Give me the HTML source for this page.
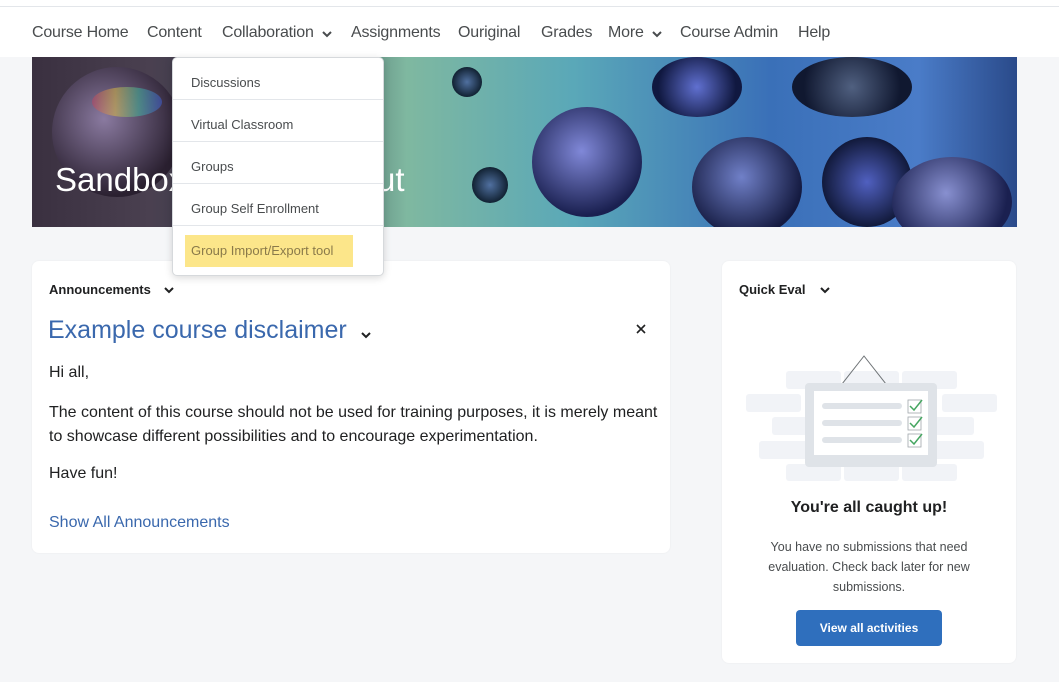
<!DOCTYPE html>
<html><head><meta charset="utf-8"><style>
*{box-sizing:border-box;margin:0;padding:0}
body{width:1059px;height:682px;overflow:hidden;background:#f5f6f8;font-family:"Liberation Sans",sans-serif;color:#202122;position:relative}
.a{position:absolute;white-space:nowrap}
.top{position:absolute;left:0;top:0;width:1059px;height:7px;background:#fff;border-bottom:1px solid #e3e6ea}
.nav{position:absolute;left:0;top:7px;width:1059px;height:50px;background:#fff}
.nav span{position:absolute;top:17px;font-size:16px;color:#494c4e;letter-spacing:-0.2px}
.banner{position:absolute;left:32px;top:57px;width:985px;height:170px;overflow:hidden;
background:linear-gradient(90deg,#3a3040 0%,#4a4050 12%,#2d3a48 25%,#7fb8a0 38%,#5aa8b8 55%,#3a70b8 75%,#4a7cc8 90%,#2a4a8a 100%)}
.banner i{position:absolute;border-radius:50%}
.dd{position:absolute;z-index:10;left:172px;top:57px;width:212px;height:219px;background:#fff;border:1px solid #d6d9dc;border-radius:5px;box-shadow:0 2px 8px rgba(0,0,0,.15)}
.dd div{height:42px;border-bottom:1px solid #e3e6ea;font-size:13px;color:#494c4e;padding:17px 0 0 18px}
.dd div:last-child{border:none}
.card{position:absolute;background:#fff;border-radius:7px;box-shadow:0 0 2px rgba(0,0,0,.05)}
</style></head><body>
<div class="top"></div>
<div class="nav">
<span style="left:32px">Course Home</span>
<span style="left:147px">Content</span>
<span style="left:222px">Collaboration</span>
<svg class="a" style="left:321px;top:23px" width="12" height="8" viewBox="0 0 12 8"><path d="M2 2l4 4 4-4" stroke="#494c4e" stroke-width="2" fill="none"/></svg>
<span style="left:351px">Assignments</span>
<span style="left:458px">Ouriginal</span>
<span style="left:541px">Grades</span>
<span style="left:608px">More</span>
<svg class="a" style="left:651px;top:23px" width="12" height="8" viewBox="0 0 12 8"><path d="M2 2l4 4 4-4" stroke="#494c4e" stroke-width="2" fill="none"/></svg>
<span style="left:680px">Course Admin</span>
<span style="left:798px">Help</span>
</div>
<div class="banner">
<i style="left:20px;top:10px;width:130px;height:130px;background:radial-gradient(circle at 40% 40%,#8a7aa0,#2a2030 70%)"></i>
<i style="left:60px;top:30px;width:70px;height:30px;background:linear-gradient(90deg,#c04060,#e0c040,#40c0a0,#4060e0);opacity:.5"></i>
<i style="left:150px;top:80px;width:90px;height:90px;background:radial-gradient(circle,#504858,#201820 70%)"></i>
<i style="left:500px;top:50px;width:110px;height:110px;background:radial-gradient(circle at 45% 40%,#8088d8,#1a2050 72%)"></i>
<i style="left:620px;top:0px;width:90px;height:60px;background:radial-gradient(circle,#6070d0,#101840 72%)"></i>
<i style="left:660px;top:80px;width:110px;height:100px;background:radial-gradient(circle at 45% 40%,#7080c8,#141a40 72%)"></i>
<i style="left:790px;top:80px;width:90px;height:90px;background:radial-gradient(circle,#5060c0,#101838 72%)"></i>
<i style="left:860px;top:100px;width:120px;height:90px;background:radial-gradient(circle at 45% 40%,#8890d0,#1a2050 72%)"></i>
<i style="left:760px;top:0;width:120px;height:60px;background:radial-gradient(circle,#506080,#101830 72%)"></i>
<i style="left:420px;top:10px;width:30px;height:30px;background:radial-gradient(circle,#5070a0,#102030 72%)"></i>
<i style="left:440px;top:110px;width:36px;height:36px;background:radial-gradient(circle,#5070a0,#102030 72%)"></i>
<div class="a" style="left:23px;top:104px;font-size:33px;color:#fff">Sandbox</div>
<div class="a" style="left:345px;top:104px;font-size:33px;color:#fff">ut</div>
</div>
<div class="dd">
<div>Discussions</div><div>Virtual Classroom</div><div>Groups</div><div>Group Self Enrollment</div>
<div style="padding:0"><span class="a" style="left:12px;top:177px;width:168px;height:32px;background:#fce68a;color:#8a7a4a;font-size:13px;padding:8px 0 0 6px">Group Import/Export tool</span></div>
</div>
<div class="card" style="left:32px;top:261px;width:638px;height:292px">
<div class="a" style="left:17px;top:21px;font-size:13px;font-weight:bold;color:#202122">Announcements</div>
<svg class="a" style="left:131px;top:25px" width="12" height="8" viewBox="0 0 12 8"><path d="M2 2l4 4 4-4" stroke="#202122" stroke-width="2" fill="none"/></svg>
<div class="a" style="left:16px;top:55px;font-size:25px;color:#3a68ad">Example course disclaimer</div>
<svg class="a" style="left:328px;top:70px" width="12" height="8" viewBox="0 0 12 8"><path d="M2 2l4 4 4-4" stroke="#202122" stroke-width="2" fill="none"/></svg>
<svg class="a" style="left:603px;top:62px" width="12" height="12" viewBox="0 0 12 12"><path d="M2 2l8 8M10 2l-8 8" stroke="#202122" stroke-width="1.6"/></svg>
<div class="a" style="left:17px;top:103px;font-size:16px">Hi all,</div>
<div class="a" style="left:17px;top:140px;font-size:16px;line-height:24px">The content of this course should not be used for training purposes, it is merely meant<br>to showcase different possibilities and to encourage experimentation.</div>
<div class="a" style="left:17px;top:204px;font-size:16px">Have fun!</div>
<div class="a" style="left:17px;top:253px;font-size:16px;color:#3a68ad">Show All Announcements</div>
</div>
<div class="card" style="left:722px;top:261px;width:294px;height:402px">
<div class="a" style="left:17px;top:21px;font-size:13px;font-weight:bold">Quick Eval</div>
<svg class="a" style="left:97px;top:25px" width="12" height="8" viewBox="0 0 12 8"><path d="M2 2l4 4 4-4" stroke="#202122" stroke-width="2" fill="none"/></svg>
<svg class="a" style="left:22px;top:90px" width="256" height="130" viewBox="0 0 256 130">
<g fill="#f1f3f7"><rect x="42" y="20" width="55" height="18" rx="3"/><rect x="100" y="20" width="55" height="18" rx="3"/><rect x="158" y="20" width="55" height="18" rx="3"/>
<rect x="2" y="43" width="55" height="18" rx="3"/><rect x="198" y="43" width="55" height="18" rx="3"/>
<rect x="28" y="66" width="55" height="18" rx="3"/><rect x="175" y="66" width="55" height="18" rx="3"/>
<rect x="15" y="90" width="55" height="18" rx="3"/><rect x="185" y="90" width="55" height="18" rx="3"/>
<rect x="42" y="113" width="55" height="17" rx="3"/><rect x="100" y="113" width="55" height="17" rx="3"/><rect x="158" y="113" width="55" height="17" rx="3"/></g>
<path d="M98 33L120 5L142 33" stroke="#6e7376" stroke-width="1" fill="none"/>
<rect x="61" y="32" width="132" height="84" rx="4" fill="#dfe3e8"/>
<rect x="70" y="40" width="114" height="64" fill="#fff"/>
<g fill="#dfe3e8"><rect x="78" y="52" width="80" height="6" rx="3"/><rect x="78" y="69" width="80" height="6" rx="3"/><rect x="78" y="86" width="80" height="6" rx="3"/></g>
<g stroke="#a0a6ab" fill="none" stroke-width="0.8"><rect x="164" y="49" width="13" height="13"/><rect x="164" y="66" width="13" height="13"/><rect x="164" y="83" width="13" height="13"/></g>
<g stroke="#46a661" fill="none" stroke-width="1.5"><path d="M166 55l4 4 8-10"/><path d="M166 72l4 4 8-10"/><path d="M166 89l4 4 8-10"/></g>
</svg>
<div class="a" style="left:0;width:294px;text-align:center;top:238px;font-size:16px;font-weight:bold">You're all caught up!</div>
<div class="a" style="left:0;width:294px;text-align:center;top:276px;font-size:12.5px;line-height:20px;color:#494c4e">You have no submissions that need<br>evaluation. Check back later for new<br>submissions.</div>
<div class="a" style="left:74px;top:349px;width:146px;height:36px;background:#2f6fbd;border-radius:4px;color:#fff;font-size:12px;font-weight:bold;text-align:center;padding-top:11px">View all activities</div>
</div>
</body></html>
